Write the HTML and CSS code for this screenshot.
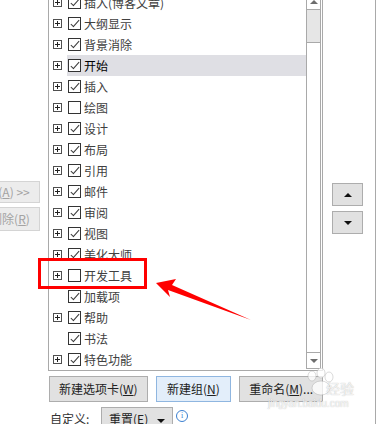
FILE: index.html
```html
<!DOCTYPE html>
<html lang="zh-CN">

<head>
   <meta charset="UTF-8">
   <title>自定义功能区</title>
   <link rel="stylesheet" href="styles.css">
</head>

<body>
   <div class="dialog">
      <div class="side-left">
         <button class="move-btn" disabled>添加(<u>A</u>) &gt;&gt;</button>
         <button class="move-btn" disabled>&lt;&lt; 删除(<u>R</u>)</button>
      </div>

      <div class="tree-col">
         <div class="tree">
            <ul class="rows">
               <li class="row"><span class="plus"></span><span class="label"><span class="check on"></span>插入(博客文章)</span></li>
               <li class="row"><span class="plus"></span><span class="label"><span class="check on"></span>大纲显示</span></li>
               <li class="row"><span class="plus"></span><span class="label"><span class="check on"></span>背景消除</span></li>
               <li class="row"><span class="plus"></span><span class="label selected"><span class="check on"></span>开始</span></li>
               <li class="row"><span class="plus"></span><span class="label"><span class="check on"></span>插入</span></li>
               <li class="row"><span class="plus"></span><span class="label"><span class="check"></span>绘图</span></li>
               <li class="row"><span class="plus"></span><span class="label"><span class="check on"></span>设计</span></li>
               <li class="row"><span class="plus"></span><span class="label"><span class="check on"></span>布局</span></li>
               <li class="row"><span class="plus"></span><span class="label"><span class="check on"></span>引用</span></li>
               <li class="row"><span class="plus"></span><span class="label"><span class="check on"></span>邮件</span></li>
               <li class="row"><span class="plus"></span><span class="label"><span class="check on"></span>审阅</span></li>
               <li class="row"><span class="plus"></span><span class="label"><span class="check on"></span>视图</span></li>
               <li class="row"><span class="plus"></span><span class="label"><span class="check on"></span>美化大师</span></li>
               <li class="row"><span class="plus"></span><span class="label"><span class="check"></span>开发工具</span></li>
               <li class="row"><span class="no-plus"></span><span class="label"><span class="check on"></span>加载项</span></li>
               <li class="row"><span class="plus"></span><span class="label"><span class="check on"></span>帮助</span></li>
               <li class="row"><span class="no-plus"></span><span class="label"><span class="check on"></span>书法</span></li>
               <li class="row"><span class="plus"></span><span class="label"><span class="check on"></span>特色功能</span></li>
            </ul>
            <div class="scrollbar">
               <div class="sb-up"><span class="tri-up"></span></div>
               <div class="sb-thumb"></div>
               <div class="sb-track"></div>
               <div class="sb-down"><span class="tri-down"></span></div>
            </div>
         </div>

         <div class="actions">
            <button class="btn btn-tab">新建选项卡(<u>W</u>)</button>
            <button class="btn btn-group">新建组(<u>N</u>)</button>
            <button class="btn btn-rename">重命名(<u>M</u>)...</button>
         </div>

         <div class="custom">
            <span class="custom-label">自定义:</span>
            <button class="btn btn-reset">重置(<u>E</u>) <span class="tri-down dark"></span></button>
            <span class="info">i</span>
         </div>
      </div>

      <div class="side-right">
         <button class="order-btn"><span class="tri-up dark"></span></button>
         <button class="order-btn"><span class="tri-down dark"></span></button>
      </div>

      <!-- annotation over the screenshot -->
      <div class="mark-box"></div>
      <svg class="mark-arrow" width="381" height="424" viewBox="0 0 381 424">
         <polygon points="156,283 176,279 172,285 251,320 168,290 170,297" fill="#ff0000" />
      </svg>

      <!-- watermark -->
      <div class="watermark">
         <svg class="paw" width="40" height="30" viewBox="0 0 40 30">
            <g fill="rgba(255,255,255,0.75)" stroke="rgba(150,150,150,0.35)" stroke-width="1">
               <ellipse cx="10" cy="8" rx="4" ry="5" />
               <ellipse cx="19" cy="5" rx="4" ry="5" />
               <ellipse cx="27" cy="9" rx="4" ry="5" />
               <ellipse cx="19" cy="20" rx="9" ry="7" />
            </g>
         </svg>
         <span class="wm-big">经验</span>
         <span class="wm-small">jingyan.baidu.com</span>
      </div>
   </div>
</body>
</html>
```

FILE: styles.css
```css
body {
   margin: 0;
   padding: 0;
   background-color: #fff;
   font-family: "Noto Sans CJK SC", "Liberation Sans", sans-serif;
   font-size: 12px;
   color: #404040;
}

.dialog {
   position: relative;
   display: flex;
   width: 381px;
   height: 424px;
   overflow: hidden;
}

/* left column: add / remove buttons, cut off by the window */

.side-left {
   display: flex;
   flex-direction: column;
   align-items: flex-end;
   gap: 4px;
   width: 48px;
   padding: 181px 8px 0 0;
   box-sizing: border-box;
   overflow: hidden;
   flex-shrink: 0;
}

.move-btn {
   flex-shrink: 0;
   width: 76px;
   height: 22px;
   padding: 0;
   font-family: inherit;
   font-size: 12px;
   line-height: 20px;
   color: #a3a3a3;
   background-color: #ececec;
   border: 1px solid #d4d4d4;
   white-space: nowrap;
}

.move-btn:last-child {
   height: 24px;
}

/* tree list */

.tree-col {
   display: flex;
   flex-direction: column;
   width: 275px;
   flex-shrink: 0;
}

.tree {
   display: flex;
   height: 381px;
   margin-top: -10px;
   padding: 1px;
   border: 1px solid #a9a9a9;
   box-sizing: border-box;
}

.rows {
   flex: 1;
   margin: 0;
   padding: 0;
   list-style: none;
}

.row {
   display: flex;
   align-items: center;
   height: 21px;
}

.plus,
.no-plus {
   position: relative;
   width: 9px;
   height: 9px;
   margin: 0 5px 0 3px;
   box-sizing: border-box;
   flex-shrink: 0;
}

.plus {
   border: 1px solid #4f4f4f;
}

.plus::before,
.plus::after {
   content: "";
   position: absolute;
   background-color: #222;
}

.plus::before {
   left: 1px;
   top: 3px;
   width: 5px;
   height: 1px;
}

.plus::after {
   left: 3px;
   top: 1px;
   width: 1px;
   height: 5px;
}

.label {
   display: flex;
   align-items: center;
   flex: 1;
   height: 21px;
   padding-left: 1px;
   line-height: 21px;
   white-space: nowrap;
}

.label.selected {
   background-color: #dfdfe4;
   color: #000;
}

.check {
   position: relative;
   width: 13px;
   height: 13px;
   margin-right: 3px;
   border: 1px solid #333;
   box-sizing: border-box;
   background-color: #fff;
   flex-shrink: 0;
}

.check.on::after {
   content: "";
   position: absolute;
   left: 4px;
   top: 0px;
   width: 3px;
   height: 8px;
   border-right: 1.2px solid #3a3a3a;
   border-bottom: 1.2px solid #3a3a3a;
   transform: rotate(42deg);
}

/* scrollbar */

.scrollbar {
   display: flex;
   flex-direction: column;
   width: 15px;
   border: 1px solid #a9a9a9;
   box-sizing: border-box;
}

.sb-up {
   display: flex;
   align-items: flex-end;
   justify-content: center;
   height: 17px;
   padding-bottom: 5px;
   border-bottom: 1px solid #a9a9a9;
   box-sizing: border-box;
}

.sb-thumb {
   height: 33px;
   background-color: #e6e6e6;
   border-bottom: 1px solid #a9a9a9;
   box-sizing: border-box;
}

.sb-track {
   flex: 1;
}

.sb-down {
   display: flex;
   align-items: center;
   justify-content: center;
   height: 16px;
   border-top: 1px solid #a9a9a9;
   box-sizing: border-box;
}

.tri-up,
.tri-down {
   display: inline-block;
   width: 0;
   height: 0;
   border-left: 4px solid transparent;
   border-right: 4px solid transparent;
}

.tri-up {
   border-bottom: 4px solid #6d6d6d;
}

.tri-down {
   border-top: 4px solid #6d6d6d;
}

.tri-up.dark {
   border-bottom-color: #111;
}

.tri-down.dark {
   border-top-color: #111;
}

/* buttons under the tree */

.btn {
   height: 26px;
   padding: 0;
   font-family: inherit;
   font-size: 12px;
   line-height: 24px;
   color: #222;
   background-color: #e1e1e1;
   border: 1px solid #adadad;
   white-space: nowrap;
   overflow: hidden;
}

.actions {
   display: flex;
   gap: 8px;
   margin-top: 5px;
   padding-left: 1px;
}

.btn-tab {
   width: 99px;
}

.btn-group {
   width: 76px;
   background-color: #e3eefa;
   border-color: #8fb6e0;
}

.btn-rename {
   width: 84px;
}

.custom {
   display: flex;
   align-items: flex-start;
   margin-top: 5px;
   padding-left: 2px;
}

.custom-label {
   width: 51px;
   margin-top: 4px;
   line-height: 16px;
   color: #333;
}

.btn-reset {
   width: 72px;
   height: 24px;
   line-height: 22px;
}

.btn-reset .tri-down {
   margin-left: 6px;
   vertical-align: middle;
}

.info {
   width: 10px;
   height: 10px;
   margin: 3px 0 0 3px;
   border: 1px solid #3b7fd0;
   border-radius: 50%;
   font-family: "Liberation Serif", serif;
   font-size: 8px;
   line-height: 10px;
   text-align: center;
   color: #3b7fd0;
}

/* right column: move up / down */

.side-right {
   display: flex;
   flex-direction: column;
   gap: 5px;
   width: 53px;
   padding: 183px 0 0 9px;
   border-right: 1px solid #a9a9a9;
   box-sizing: border-box;
   flex-shrink: 0;
}

.order-btn {
   display: flex;
   align-items: center;
   justify-content: center;
   width: 31px;
   height: 23px;
   padding: 0;
   background-color: #e1e1e1;
   border: 1px solid #adadad;
}

/* red annotation */

.mark-box {
   position: absolute;
   left: 38px;
   top: 258px;
   width: 109px;
   height: 31px;
   border: 3px solid #ff0000;
   box-sizing: border-box;
}

.mark-arrow {
   position: absolute;
   left: 0;
   top: 0;
   pointer-events: none;
}

/* baidu watermark */

.watermark {
   position: absolute;
   left: 268px;
   top: 368px;
   width: 110px;
   height: 46px;
   pointer-events: none;
}

.paw {
   position: absolute;
   left: 34px;
   top: 0;
}

.wm-big {
   position: absolute;
   left: 58px;
   top: 12px;
   font-size: 14px;
   line-height: 16px;
   color: rgba(255, 255, 255, 0.8);
   text-shadow: 0 0 1px rgba(120, 120, 120, 0.6);
}

.wm-small {
   position: absolute;
   left: 0;
   top: 30px;
   font-family: "Liberation Sans", sans-serif;
   font-size: 10px;
   line-height: 12px;
   color: rgba(255, 255, 255, 0.85);
   text-shadow: 0 0 1px rgba(120, 120, 120, 0.6);
}
```
